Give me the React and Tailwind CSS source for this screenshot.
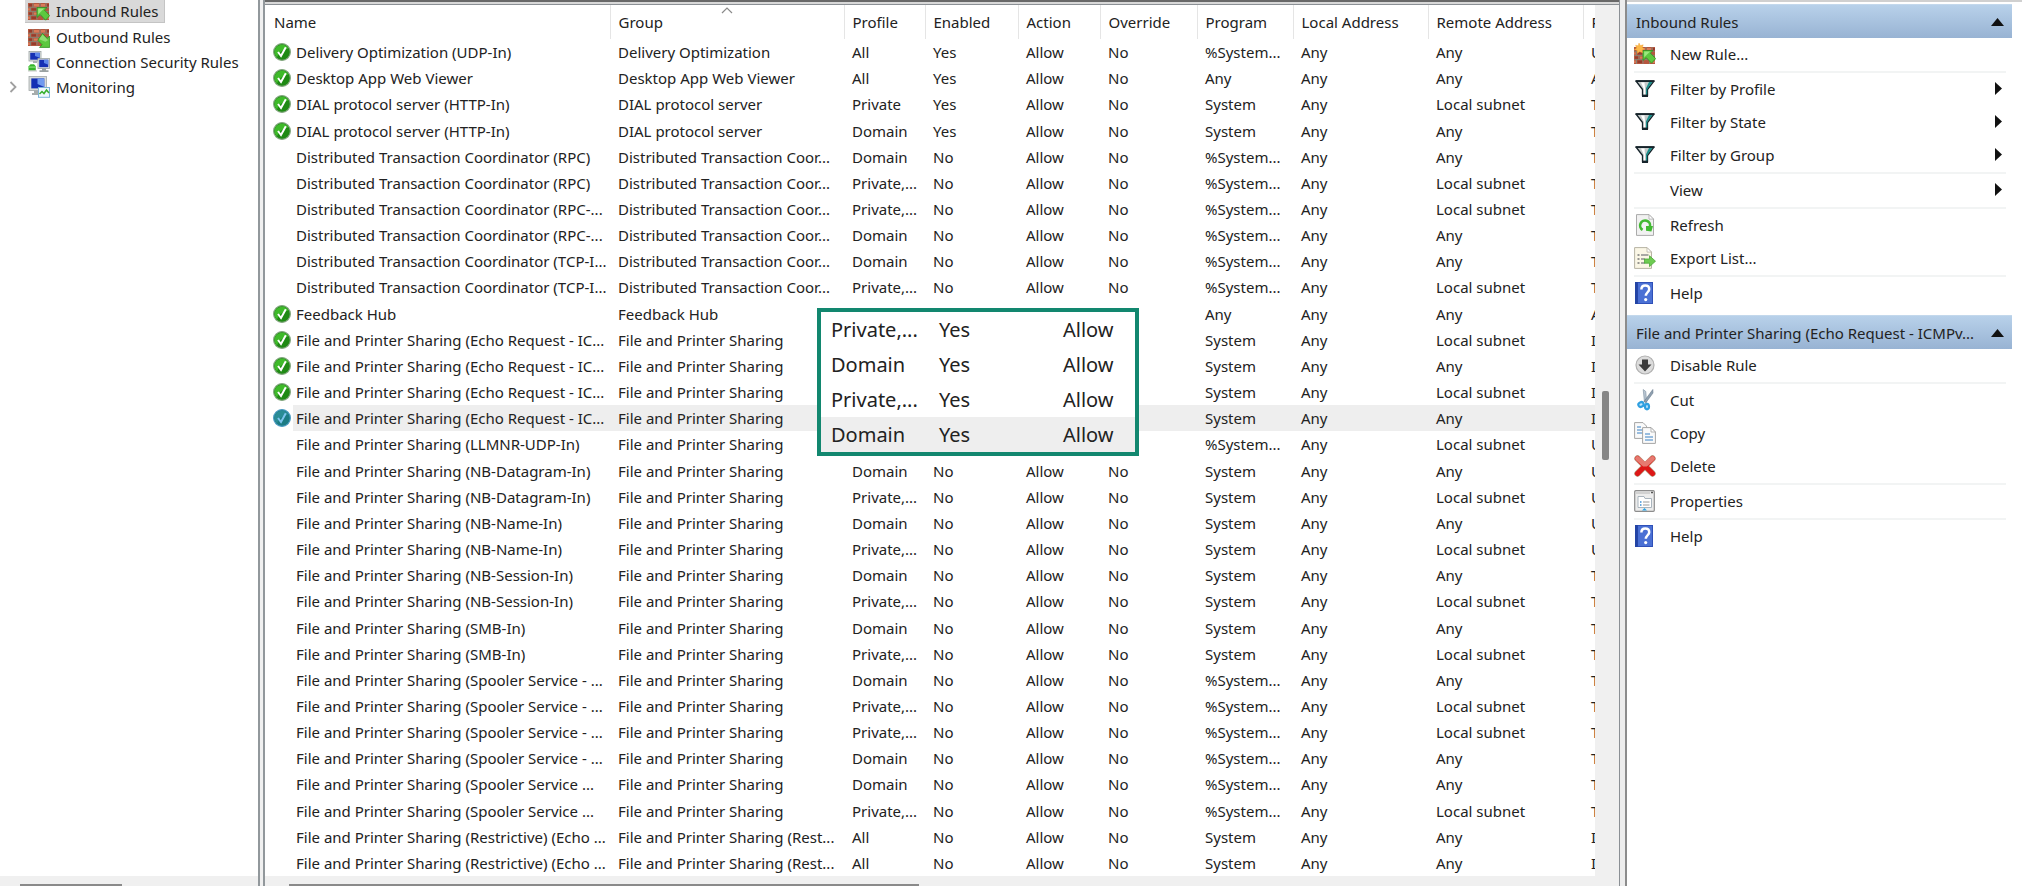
import React from "react";

/* ---------- icons ---------- */

const Bricks = () => (
  <>
    <rect x="0" y="1" width="21" height="17" fill="#b5573f" />
    <path
      d="M0 5.2h21M0 9.4h21M0 13.6h21M5 1v4.2M12 1v4.2M18 1v4.2M2.5 5.2v4.2M9 5.2v4.2M15.500 5.2v4.2M5 9.4v4.2M12 9.4v4.2M18 9.4v4.2M2.500 13.6V18M9 13.6V18M15.500 13.6V18"
      stroke="#8a8072"
      strokeWidth="1"
      fill="none"
    />
    <path d="M6 2h5v2.400H6zM10 10.400h-4v2.400h4zM0 6.200h1.800v2.400H0zM16.200 14.600H21V17h-4.800zM13 2h4v2.400h-4zM0 14.600h1.800V17H0z" fill="#d97a58" />
    <path d="M1 2h3v2.400H1zM3.500 6.200h4.500v2.400H3.500zM1 10.400h3v2.400H1zM3.500 14.600h4.500V17H3.500zM19 2h2v2.400h-2z" fill="#963c2c" />
  </>
);

const arrowFill = { fill: "#5cc83f", stroke: "#2f8f22", strokeWidth: 0.8, strokeLinejoin: "round" };

const InboundIcon = ({ star }) => (
  <svg viewBox="0 0 22 22" className="h-[22px] w-[22px]" aria-hidden="true">
    <g transform={star ? "translate(0 3)" : "translate(0 2)"}>
      <Bricks />
    </g>
    <path d="M9 7.500h10l-2.600 2.600 5.300 5.500-4.100 4.600-5.400-5.600L9 17.400z" {...arrowFill} />
    <path d="M10.200 8.500h6l-6 5.800z" fill="#9be87f" />
    {star && (
      <path d="M5 0l1.400 2.600L9.200 1.800 8.400 4.600 10.500 6 8 7l.6 2.800L5.600 8.600 3.400 10.400 3.200 7.400.2 6.600 2.600 5 1.600 2.200l2.600.6z" fill="#fbb84a" stroke="#f3a02e" strokeWidth="0.400" />
    )}
  </svg>
);

const OutboundIcon = () => (
  <svg viewBox="0 0 22 22" className="h-[22px] w-[22px]" aria-hidden="true">
    <g transform="translate(0 2)">
      <Bricks />
    </g>
    <path d="M14.500 7.500l4.800 4.900 2.400-2.400v11.400H11.500l2.600-2.600-4.300-4.600z" {...arrowFill} />
    <path d="M14.500 8.600l5.500 5.600-2.500 1.600-6.400-2.600z" fill="#8fdc74" />
  </svg>
);

const ConnectionIcon = () => (
  <svg viewBox="0 0 22 22" className="h-[22px] w-[22px]" aria-hidden="true">
    <rect x="1" y="0.500" width="12" height="9.500" fill="#e3e6e3" stroke="#9aa2a2" strokeWidth="0.800" />
    <rect x="2.200" y="1.700" width="9.600" height="7" fill="#1530b4" />
    <path d="M7 1.700h4.800v5L7 5z" fill="#5c86ea" />
    <path d="M5 10h4v2H5z" fill="#a9b0b0" />
    <rect x="10" y="7.500" width="11.500" height="10" fill="#e3e6e3" stroke="#9aa2a2" strokeWidth="0.800" />
    <rect x="11.200" y="8.700" width="9.100" height="7.500" fill="#1530b4" />
    <path d="M16 8.700h4.300v5L16 12z" fill="#5c86ea" />
    <path d="M14 17.500h4v1.800h2.500v1.700h-9v-1.700H14z" fill="#9aa2a2" />
    <path d="M0.500 15.500l2-2.200h3.500l1.800 2v4.200H0.500z" fill="#35b52a" />
    <path d="M0.500 15.500h7.300v1.200H0.500z" fill="#8be07c" />
    <path d="M0 19.500h9v.9H0z" fill="#b8b8b8" />
  </svg>
);

const MonitoringIcon = () => (
  <svg viewBox="0 0 22 22" className="h-[22px] w-[22px]" aria-hidden="true">
    <rect x="1" y="0.500" width="17.500" height="14" fill="#d9dcda" stroke="#a2a8a8" strokeWidth="0.800" />
    <rect x="3.300" y="2.400" width="13" height="10" fill="#1530b4" />
    <path d="M9.500 2.400h6.800v8.600l-6.800-3z" fill="#6f9af0" />
    <path d="M6 14.500h6V17h2.500v2H4v-2h2z" fill="#a7adad" />
    <rect x="10.500" y="11.500" width="11" height="9.800" fill="#eef7fd" stroke="#7db4d8" />
    <path d="M11.500 18l2.500-2.500 2 2 2.500-3.500 2.500 3" fill="none" stroke="#38b02c" strokeWidth="1.500" />
  </svg>
);

const CheckIcon = ({ selected }) => (
  <svg viewBox="0 0 18 18" className="block h-[18px] w-[18px]" role="img" aria-label="Enabled">
    <circle cx="9" cy="9" r="8.400" fill={selected ? "#1c7c84" : "#1f8a14"} stroke={selected ? "#4d9cc4" : "#86a882"} strokeWidth="1.200" />
    <path d="M1.500 9a7.500 7.500 0 0 1 14-3.500C11 6 6 9 4 14.500A7.500 7.500 0 0 1 1.500 9z" fill={selected ? "#2a8c96" : "#3fba2a"} />
    <path d="M5 9l3 4L12.800 4.200" fill="none" stroke={selected ? "#7cc3ee" : "#ffffff"} strokeWidth="2" />
  </svg>
);

const FilterIcon = () => (
  <svg viewBox="0 0 22 22" className="h-[22px] w-[22px]" aria-hidden="true">
    <path d="M2 3h18l-6.500 8.500V18h-5v-6.500z" fill="#c4caca" stroke="#16232a" strokeWidth="1.300" strokeLinejoin="round" />
    <path d="M15 4h3.500l-5.300 7v6.300h-1.200v-7z" fill="#1c8f8b" />
    <path d="M7 4.600h3.500l.5 6V17H9.800v-6.200z" fill="#ffffff" />
    <path d="M1.600 2.300h18.800v1.700H1.600z" fill="#16232a" />
    <path d="M8 16.600h6V19H8z" fill="#16232a" />
  </svg>
);

const RefreshIcon = () => (
  <svg viewBox="0 0 22 22" className="h-[22px] w-[22px]" aria-hidden="true">
    <path d="M2.500.6h12.500l4.500 4.500v16.300h-17z" fill="#f1f1f1" stroke="#ababab" />
    <path d="M15 .6v4.500h4.500z" fill="#ffffff" stroke="#ababab" strokeWidth="0.800" />
    <path d="M8.600 15.800A5 5 0 1 1 16 12.500" fill="none" stroke="#41b931" strokeWidth="2.600" />
    <path d="M12 12h7l-1.600 5.600-5.400-.8z" fill="#41b931" />
  </svg>
);

const ExportIcon = () => (
  <svg viewBox="0 0 22 22" className="h-[22px] w-[22px]" aria-hidden="true">
    <path d="M.6.600h12.400l4.500 4.500v16.300H.6z" fill="#fbf7e6" stroke="#b7b3a4" />
    <path d="M13 .6v4.500h4.500z" fill="#ffffff" stroke="#b7b3a4" strokeWidth="0.800" />
    <path d="M3.500 8h2M3.500 12h2M3.500 16h2" stroke="#777" strokeWidth="1.600" />
    <path d="M7 8h7.500M7 12h4M7 16h4" stroke="#8f8f8f" strokeWidth="1.400" />
    <path d="M10.500 12h5V8.800l6 5.400-6 5.400v-3.400h-5z" fill="#6ecb52" stroke="#4aa836" strokeWidth="0.800" />
  </svg>
);

const HelpIcon = () => (
  <svg viewBox="0 0 22 22" className="h-[22px] w-[22px]" aria-hidden="true">
    <rect x="1" y="0" width="18" height="22" fill="#2f50b8" />
    <path d="M4 1h14v20H4z" fill="#4a70d4" />
    <path d="M1 0h2.800v22H1z" fill="#2344a4" />
    <path d="M7.400 7.600C7.400 4.800 9 3.600 11.200 3.600s4 1.200 4 3.600c0 2.800-3.400 3.400-3.400 6.600" fill="none" stroke="#ffffff" strokeWidth="2.500" />
    <circle cx="11.700" cy="17.600" r="1.600" fill="#ffffff" />
  </svg>
);

const DisableIcon = () => (
  <svg viewBox="0 0 22 22" className="h-[22px] w-[22px]" aria-hidden="true">
    <circle cx="11" cy="11" r="9" fill="#dcdcdc" stroke="#b0b0b0" strokeWidth="1.200" />
    <path d="M8 5.500h6v5h3.500L11 17.500 4.500 10.500H8z" fill="#3a3a3a" />
  </svg>
);

const CutIcon = () => (
  <svg viewBox="0 0 22 22" className="h-[22px] w-[22px]" aria-hidden="true">
    <path d="M9.200.500l2.600 2 .8 11-2.200-1z" fill="#b9c6d2" stroke="#7b8ea0" strokeWidth="0.600" />
    <path d="M18.800.5l.2 3.500-7 9.500-2-1z" fill="#8fa0b0" stroke="#66798c" strokeWidth="0.600" />
    <ellipse cx="7" cy="15.500" rx="2.700" ry="2.300" fill="#c4e6fa" stroke="#2f9fe0" strokeWidth="2.200" transform="rotate(-25 7 15.500)" />
    <ellipse cx="13" cy="17.600" rx="2" ry="2.700" fill="#c4e6fa" stroke="#2f9fe0" strokeWidth="2.200" />
  </svg>
);

const CopyIcon = () => (
  <svg viewBox="0 0 22 22" className="h-[22px] w-[22px]" aria-hidden="true">
    <path d="M.6.600h8.400l3.500 3.500v12.300H.6z" fill="#fafafa" stroke="#a5a5a5" />
    <path d="M3 5h4M3 8h6M3 11h6" stroke="#7aa9d6" strokeWidth="1.300" />
    <path d="M8.600 5.600h8.400l4.400 4.400v11.400H8.600z" fill="#fafafa" stroke="#a5a5a5" />
    <path d="M17 5.600V10h4.400z" fill="#ffffff" stroke="#a5a5a5" strokeWidth="0.800" />
    <path d="M11 12h5M11 15h8M11 18h8" stroke="#7aa9d6" strokeWidth="1.400" />
  </svg>
);

const DeleteIcon = () => (
  <svg viewBox="0 0 22 22" className="h-[22px] w-[22px]" aria-hidden="true">
    <path d="M3.500 3.500l15 15M18.500 3.500l-15 15" stroke="#b9a58c" strokeWidth="6.400" strokeLinecap="round" />
    <path d="M3.500 3.500l15 15M18.500 3.500l-15 15" stroke="#dd1717" strokeWidth="5.200" strokeLinecap="round" />
    <path d="M3.500 3.500l6.500 5.500h2l6.500-5.500" fill="none" stroke="#e67a70" strokeWidth="4.800" strokeLinecap="round" />
  </svg>
);

const PropertiesIcon = () => (
  <svg viewBox="0 0 22 22" className="h-[22px] w-[22px]" aria-hidden="true">
    <rect x="0.700" y="0.700" width="19.600" height="20.600" rx="1" fill="#ececec" stroke="#8d8d8d" strokeWidth="1.200" />
    <path d="M2 3h14" stroke="#c9c9c9" strokeWidth="1.500" />
    <path d="M17 2.500h2" stroke="#555" strokeWidth="1.500" />
    <path d="M4 6.500h6l1 2h6.500v9H4z" fill="#ffffff" stroke="#a9b4bd" />
    <path d="M6 12h1.500M6 15h1.500" stroke="#3a8fd6" strokeWidth="1.400" />
    <path d="M9 12h6.500M9 15h6.500" stroke="#9a9a9a" strokeWidth="1.200" />
    <path d="M8 20.500l2.500-2.500 2.500 2.500z" fill="#29a3e6" />
  </svg>
);

/* ---------- data ---------- */

const FPS = "File and Printer Sharing";
const DTC = "Distributed Transaction Coordinator";
const DTC_GROUP = "Distributed Transaction Coor...";
const SYS = "%System...";
const PRIV = "Private,...";
const LOCAL = "Local subnet";

// name, group, profile, enabled, program, remote address, protocol
const rules = [
  ["Delivery Optimization (UDP-In)", "Delivery Optimization", "All", "Yes", SYS, "Any", "UDP"],
  ["Desktop App Web Viewer", "Desktop App Web Viewer", "All", "Yes", "Any", "Any", "Any"],
  ["DIAL protocol server (HTTP-In)", "DIAL protocol server", "Private", "Yes", "System", LOCAL, "TCP"],
  ["DIAL protocol server (HTTP-In)", "DIAL protocol server", "Domain", "Yes", "System", "Any", "TCP"],
  [`${DTC} (RPC)`, DTC_GROUP, "Domain", "No", SYS, "Any", "TCP"],
  [`${DTC} (RPC)`, DTC_GROUP, PRIV, "No", SYS, LOCAL, "TCP"],
  [`${DTC} (RPC-...`, DTC_GROUP, PRIV, "No", SYS, LOCAL, "TCP"],
  [`${DTC} (RPC-...`, DTC_GROUP, "Domain", "No", SYS, "Any", "TCP"],
  [`${DTC} (TCP-I...`, DTC_GROUP, "Domain", "No", SYS, "Any", "TCP"],
  [`${DTC} (TCP-I...`, DTC_GROUP, PRIV, "No", SYS, LOCAL, "TCP"],
  ["Feedback Hub", "Feedback Hub", "Domain", "Yes", "Any", "Any", "Any"],
  [`${FPS} (Echo Request - IC...`, FPS, PRIV, "Yes", "System", LOCAL, "ICMPv6"],
  [`${FPS} (Echo Request - IC...`, FPS, "Domain", "Yes", "System", "Any", "ICMPv6"],
  [`${FPS} (Echo Request - IC...`, FPS, PRIV, "Yes", "System", LOCAL, "ICMPv4"],
  [`${FPS} (Echo Request - IC...`, FPS, "Domain", "Yes", "System", "Any", "ICMPv4"],
  [`${FPS} (LLMNR-UDP-In)`, FPS, "All", "No", SYS, LOCAL, "UDP"],
  [`${FPS} (NB-Datagram-In)`, FPS, "Domain", "No", "System", "Any", "UDP"],
  [`${FPS} (NB-Datagram-In)`, FPS, PRIV, "No", "System", LOCAL, "UDP"],
  [`${FPS} (NB-Name-In)`, FPS, "Domain", "No", "System", "Any", "UDP"],
  [`${FPS} (NB-Name-In)`, FPS, PRIV, "No", "System", LOCAL, "UDP"],
  [`${FPS} (NB-Session-In)`, FPS, "Domain", "No", "System", "Any", "TCP"],
  [`${FPS} (NB-Session-In)`, FPS, PRIV, "No", "System", LOCAL, "TCP"],
  [`${FPS} (SMB-In)`, FPS, "Domain", "No", "System", "Any", "TCP"],
  [`${FPS} (SMB-In)`, FPS, PRIV, "No", "System", LOCAL, "TCP"],
  [`${FPS} (Spooler Service - ...`, FPS, "Domain", "No", SYS, "Any", "TCP"],
  [`${FPS} (Spooler Service - ...`, FPS, PRIV, "No", SYS, LOCAL, "TCP"],
  [`${FPS} (Spooler Service - ...`, FPS, PRIV, "No", SYS, LOCAL, "TCP"],
  [`${FPS} (Spooler Service - ...`, FPS, "Domain", "No", SYS, "Any", "TCP"],
  [`${FPS} (Spooler Service ...`, FPS, "Domain", "No", SYS, "Any", "TCP"],
  [`${FPS} (Spooler Service ...`, FPS, PRIV, "No", SYS, LOCAL, "TCP"],
  [`${FPS} (Restrictive) (Echo ...`, `${FPS} (Rest...`, "All", "No", "System", "Any", "ICMPv4"],
  [`${FPS} (Restrictive) (Echo ...`, `${FPS} (Rest...`, "All", "No", "System", "Any", "ICMPv6"],
];

const SELECTED = 14;
// Rows whose middle cells lie behind the callout.
const COVERED_FROM = 10;
const COVERED_TO = 15;

const headers = ["Group", "Profile", "Enabled", "Action", "Override", "Program", "Local Address", "Remote Address", "Protocol"];

const callout = [
  [PRIV, "Yes", "Allow"],
  ["Domain", "Yes", "Allow"],
  [PRIV, "Yes", "Allow"],
  ["Domain", "Yes", "Allow"],
];

const tree = [
  { label: "Inbound Rules", icon: <InboundIcon />, selected: true },
  { label: "Outbound Rules", icon: <OutboundIcon /> },
  { label: "Connection Security Rules", icon: <ConnectionIcon /> },
  { label: "Monitoring", icon: <MonitoringIcon />, expandable: true },
];

const inboundActions = [
  [{ label: "New Rule...", icon: <InboundIcon star /> }],
  [
    { label: "Filter by Profile", icon: <FilterIcon />, submenu: true },
    { label: "Filter by State", icon: <FilterIcon />, submenu: true },
    { label: "Filter by Group", icon: <FilterIcon />, submenu: true },
  ],
  [{ label: "View", submenu: true }],
  [
    { label: "Refresh", icon: <RefreshIcon /> },
    { label: "Export List...", icon: <ExportIcon /> },
  ],
  [{ label: "Help", icon: <HelpIcon /> }],
];

const ruleActions = [
  [{ label: "Disable Rule", icon: <DisableIcon /> }],
  [
    { label: "Cut", icon: <CutIcon /> },
    { label: "Copy", icon: <CopyIcon /> },
    { label: "Delete", icon: <DeleteIcon /> },
  ],
  [{ label: "Properties", icon: <PropertiesIcon /> }],
  [{ label: "Help", icon: <HelpIcon /> }],
];

/* ---------- panels ---------- */

function Tree() {
  return (
    <nav aria-label="Console tree" className="flex w-[258px] shrink-0 flex-col bg-white">
      <ul className="flex-1">
        {tree.map((item) => (
          <li key={item.label} className="flex h-[25px] items-start">
            <span className="flex h-[23px] w-[25px] shrink-0 items-center justify-center">
              {item.expandable && (
                <svg viewBox="0 0 8 12" className="h-3 w-2" aria-hidden="true">
                  <path d="M1.500 1l5 5-5 5" fill="none" stroke="#a0a0a0" strokeWidth="1.800" />
                </svg>
              )}
            </span>
            <button
              type="button"
              className={
                item.selected
                  ? "flex h-[23px] items-center gap-[6px] border-r border-b border-[#c4c4c4] bg-[#d9d9d9] pr-[6px] pl-[3px]"
                  : "flex h-[23px] items-center gap-[6px] pr-[6px] pl-[3px]"
              }
            >
              {item.icon}
              <span>{item.label}</span>
            </button>
          </li>
        ))}
      </ul>
      <div className="flex h-[10px] items-end bg-[#f0f0f0] pl-5">
        <div className="h-[2px] w-[102px] bg-[#8a8a8a]" />
      </div>
    </nav>
  );
}

function RuleTable() {
  return (
    <table className="h-full w-full table-fixed border-collapse text-left">
      <colgroup>
        <col className="w-[28px]" />
        <col className="w-[317px]" />
        <col className="w-[234px]" />
        <col className="w-[81px]" />
        <col className="w-[93px]" />
        <col className="w-[82px]" />
        <col className="w-[97px]" />
        <col className="w-[96px]" />
        <col className="w-[135px]" />
        <col className="w-[155px]" />
        <col />
      </colgroup>
      <thead>
        <tr>
          <th colSpan={2} className="h-[34px] border-r border-[#e5e5e5] p-0 pl-[9px] font-normal">
            Name
          </th>
          {headers.map((h) => (
            <th key={h} className="relative h-[34px] overflow-hidden border-r border-[#e5e5e5] p-0 pl-2 font-normal whitespace-nowrap last:border-r-0">
              {h === "Group" && (
                <svg viewBox="0 0 12 7" className="absolute top-[2px] left-1/2 h-[7px] w-3 -translate-x-1/2" aria-hidden="true">
                  <path d="M1 6l5-5 5 5" fill="none" stroke="#8a8a8a" strokeWidth="1.200" />
                </svg>
              )}
              {h}
            </th>
          ))}
        </tr>
      </thead>
      <tbody>
        {rules.map(([name, group, profile, enabled, program, remote, protocol], i) => {
          const covered = i >= COVERED_FROM && i <= COVERED_TO;
          const cell =
            i === SELECTED
              ? "overflow-hidden bg-[#eeeeee] p-0 pl-2 whitespace-nowrap"
              : "overflow-hidden p-0 pl-2 whitespace-nowrap";
          return (
            <tr key={i}>
              <td className="p-0 pl-2">{enabled === "Yes" && <CheckIcon selected={i === SELECTED} />}</td>
              <td className={i === SELECTED ? "bg-[#eeeeee] p-0 pl-[3px] whitespace-nowrap" : "p-0 pl-[3px] whitespace-nowrap"}>{name}</td>
              <td className={cell}>{group}</td>
              <td className={cell}>{!covered && profile}</td>
              <td className={cell}>{!covered && enabled}</td>
              <td className={cell}>{!covered && "Allow"}</td>
              <td className={cell}>{!covered && "No"}</td>
              <td className={cell}>{program}</td>
              <td className={cell}>Any</td>
              <td className={cell}>{remote}</td>
              <td className={cell}>{protocol}</td>
            </tr>
          );
        })}
      </tbody>
    </table>
  );
}

function Callout() {
  return (
    <div className="absolute top-[303px] left-[552px] w-[322px] border-4 border-[#12876f] bg-white text-[20px] leading-[35px]">
      {callout.map(([profile, enabled, action], i) => (
        <div key={i} className={i === 3 ? "flex bg-[#eeeeee] pl-[10px]" : "flex pl-[10px]"}>
          <span className="w-[108px]">{profile}</span>
          <span className="w-[124px]">{enabled}</span>
          <span>{action}</span>
        </div>
      ))}
    </div>
  );
}

function ActionGroup({ title, groups }) {
  return (
    <section className="mr-[10px] mb-[5px]">
      <h2>
        <button
          type="button"
          className="flex h-[34px] w-full items-center justify-between border-t border-[#c3d8ec] bg-linear-to-b from-[#b8d1ea] to-[#98b3d3] pr-2 pl-[9px] text-left"
        >
          <span className="whitespace-nowrap">{title}</span>
          <svg viewBox="0 0 13 8" className="h-2 w-[13px] shrink-0" aria-hidden="true">
            <path d="M6.500 0L13 8H0z" fill="#111" />
          </svg>
        </button>
      </h2>
      <div className="divide-y-2 divide-[#f2f4f4] pr-[6px] pl-[7px]">
        {groups.map((items, i) => (
          <ul key={i}>
            {items.map((item) => (
              <li key={item.label}>
                <button type="button" className="flex h-[33px] w-full items-center gap-[14px] pr-1 pb-[2px] text-left">
                  <span className="flex h-[22px] w-[22px] shrink-0">{item.icon}</span>
                  <span className="flex-1">{item.label}</span>
                  {item.submenu && (
                    <svg viewBox="0 0 7 13" className="h-[13px] w-[7px]" aria-hidden="true">
                      <path d="M0 0l7 6.500L0 13z" fill="#111" />
                    </svg>
                  )}
                </button>
              </li>
            ))}
          </ul>
        ))}
      </div>
    </section>
  );
}

export default function App() {
  return (
    <div className="flex h-screen overflow-hidden bg-[#f0f0f0] font-['Noto_Sans','Open_Sans',sans-serif] text-[15px] leading-5 text-[#222222]">
      <Tree />
      <div className="w-[7px] shrink-0 border-x-2 border-[#92989c] bg-[#f0f0f0]" />

      <main className="flex min-w-0 flex-1 flex-col">
        <div className="h-[5px] shrink-0 border-t-2 border-b border-t-[#686868] border-b-[#8b9095] bg-[#d8d8d8]" />
        <div className="flex min-h-0 flex-1">
          <div className="flex min-w-0 flex-1 flex-col">
            <div className="relative min-h-0 flex-1 overflow-hidden bg-white">
              <RuleTable />
              <Callout />
            </div>
            <div className="flex h-[10px] shrink-0 items-end pl-6">
              <div className="h-[2px] w-[630px] bg-[#8a8a8a]" />
            </div>
          </div>
          <div className="w-6 shrink-0 pt-[386px] pl-[7px]">
            <div className="h-[69px] w-[7px] rounded-xs bg-[#868686]" />
          </div>
        </div>
      </main>

      <div className="w-2 shrink-0 border-r-2 border-l border-r-[#8c8c8c] border-l-[#8b9095] bg-[#ededed]" />

      <aside aria-label="Actions" className="w-[395px] shrink-0 border-t-2 border-[#d0d0d0] bg-white pt-[2px]">
        <ActionGroup title="Inbound Rules" groups={inboundActions} />
        <ActionGroup title="File and Printer Sharing (Echo Request - ICMPv..." groups={ruleActions} />
      </aside>
    </div>
  );
}
